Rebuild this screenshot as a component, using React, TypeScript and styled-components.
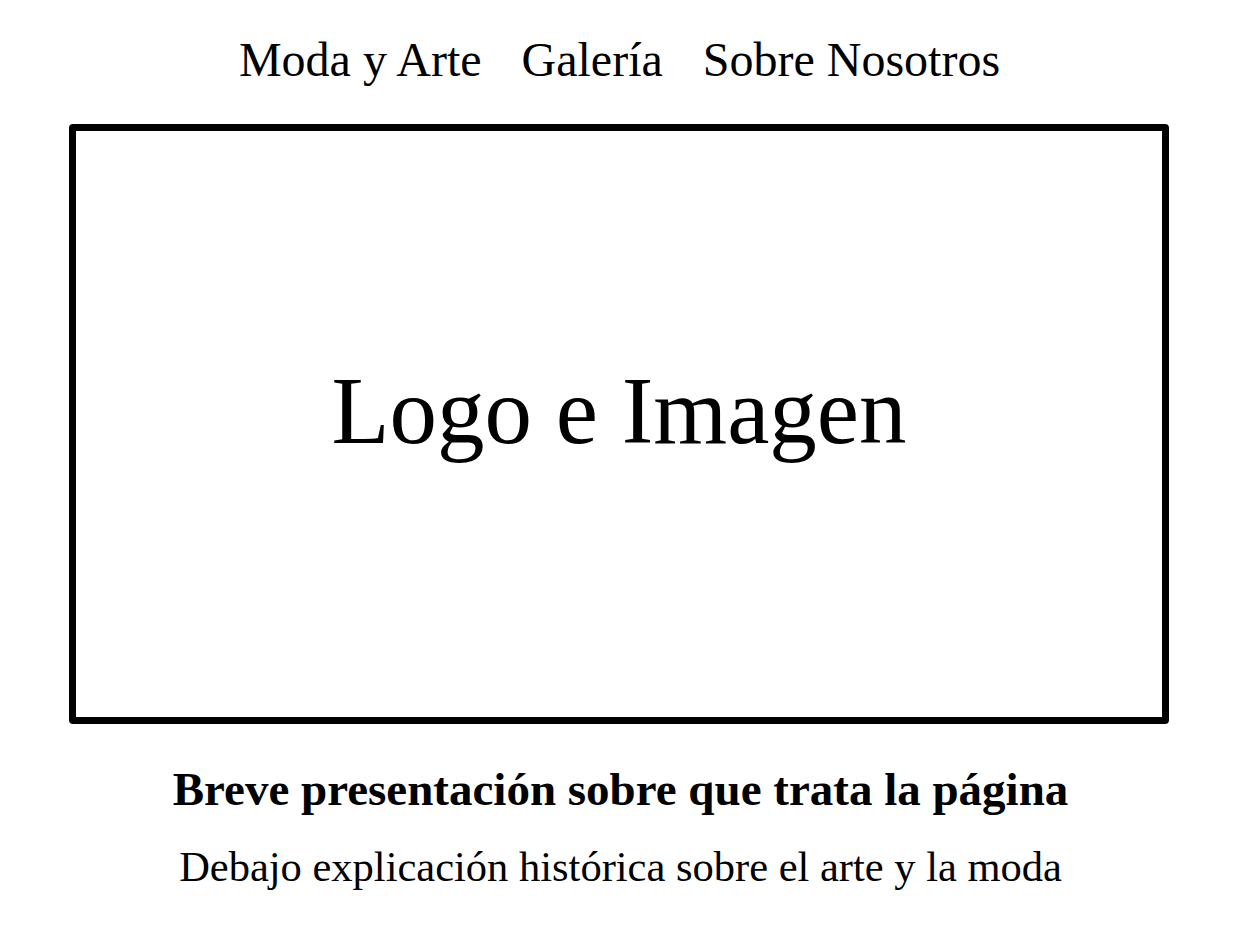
import React from "react";
import styled, { createGlobalStyle } from "styled-components";

const Global = createGlobalStyle`
  html, body { margin: 0; padding: 0; background: #fff; }
  body { font-family: "Liberation Serif", "Times New Roman", serif; color: #000; }
`;

const Page = styled.div`
  display: flex;
  flex-direction: column;
  align-items: center;
  padding-top: 32px;
`;

const Nav = styled.nav`
  display: flex;
  justify-content: center;
  gap: 40px;
  margin-right: 2px;
`;

const NavLink = styled.a`
  font-size: 48px;
  line-height: 55px;
  color: #000;
  text-decoration: none;
`;

const Hero = styled.section`
  box-sizing: border-box;
  width: 1100px;
  height: 600px;
  margin-top: 37px;
  margin-right: 3px;
  border: 7px solid #000;
  border-radius: 4px;
  display: flex;
  align-items: center;
  justify-content: center;
  padding-bottom: 26px;
`;

const HeroText = styled.h1`
  margin: 0;
  font-size: 95px;
  font-weight: 400;
  line-height: 110px;
`;

const Title = styled.h2`
  margin: 38px 0 0;
  font-size: 47px;
  font-weight: 700;
  line-height: 54px;
`;

const Subtitle = styled.p`
  margin: 27px 0 0;
  font-size: 42.5px;
  line-height: 48px;
`;

export default function App() {
  return (
    <>
      <Global />
      <Page>
        <Nav>
          <NavLink>Moda y Arte</NavLink>
          <NavLink>Galería</NavLink>
          <NavLink>Sobre Nosotros</NavLink>
        </Nav>
        <Hero>
          <HeroText>Logo e Imagen</HeroText>
        </Hero>
        <Title>Breve presentación sobre que trata la página</Title>
        <Subtitle>Debajo explicación histórica sobre el arte y la moda</Subtitle>
      </Page>
    </>
  );
}
